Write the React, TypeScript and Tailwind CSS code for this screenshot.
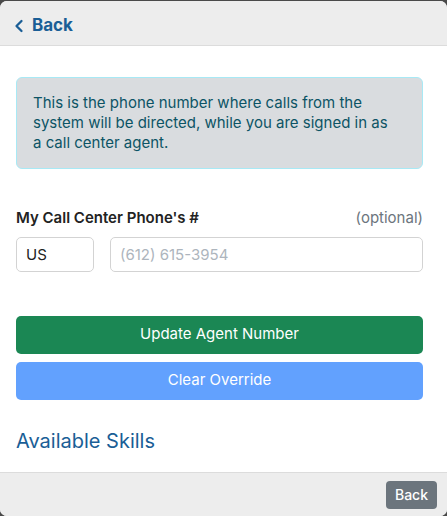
import { ChevronLeft } from "lucide-react";

export default function App() {
  return (
    <div className="h-[516px] w-[447px] bg-[#4a4a4a] pt-px font-['Inter',sans-serif]">
      <div className="flex h-[515px] flex-col overflow-hidden rounded-[7px] bg-white">
        {/* Header */}
        <div className="flex h-[45px] shrink-0 items-center border-b border-[#dcdcdc] bg-[#ededed] px-[9px] pt-[6px]">
          <button className="flex items-center gap-[3px] text-[17px] font-bold text-[#1a5e96]">
            <ChevronLeft className="h-[20px] w-[20px]" strokeWidth={2.75} />
            Back
          </button>
        </div>

        {/* Body */}
        <div className="flex flex-1 flex-col pl-4 pr-[24px] pt-[31px]">
          <div className="rounded-[6px] border border-[#a8e9f5] bg-[#d9dcdf] py-[15px] pl-[16px] pr-[24px] text-[15px] leading-[20px] text-[#0c5465]">
            This is the phone number where calls from the system will be directed, while you are signed in as a call center agent.
          </div>

          <div className="mt-[38px] flex items-end justify-between">
            <label className="text-[15px] font-semibold text-[#222]">My Call Center Phone's #</label>
            <span className="text-[15px] text-[#6c757d]">(optional)</span>
          </div>
          <div className="mt-[7px] flex gap-[16px]">
            <input
              defaultValue="US"
              className="h-[35px] w-[78px] rounded-[5px] border border-[#d3d3d3] px-[9px] text-[15px] text-[#222] outline-none"
            />
            <input
              placeholder="(612) 615-3954"
              className="h-[35px] flex-1 rounded-[5px] border border-[#d3d3d3] px-[9px] text-[15px] text-[#222] outline-none placeholder:text-[#adb5bd]"
            />
          </div>

          <button className="mt-[44px] h-[38px] w-full rounded-[5px] bg-[#1b8754] text-[15px] text-white">
            Update Agent Number
          </button>
          <button className="mt-[8px] h-[38px] w-full rounded-[5px] bg-[#62a1fe] text-[15px] text-white">
            Clear Override
          </button>

          <h2 className="mt-[26px] text-[20px] text-[#1a5e96]">Available Skills</h2>
        </div>

        {/* Footer */}
        <div className="flex h-[44px] shrink-0 items-center justify-end border-t border-[#dcdcdc] bg-[#ededed] px-[10px]">
          <button className="h-[28px] rounded-[4px] bg-[#6c757d] px-[9px] text-[14px] font-medium text-white">Back</button>
        </div>
      </div>
    </div>
  );
}
